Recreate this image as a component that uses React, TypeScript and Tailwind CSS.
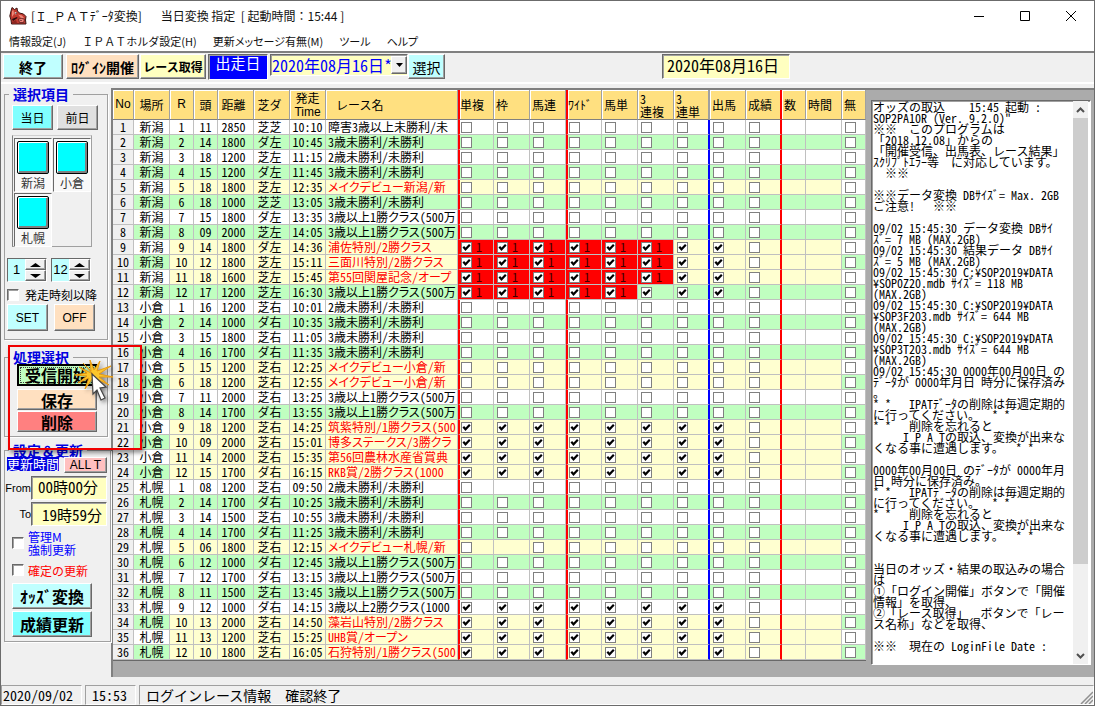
import React, { ReactNode } from 'react';
import clsx from 'clsx';

const raised =
  'border border-t-white border-l-white border-r-[#696969] border-b-[#696969] shadow-[inset_-1px_-1px_0_#a0a0a0]';
const sunken =
  'border border-t-[#696969] border-l-[#696969] border-r-white border-b-white shadow-[inset_1px_1px_0_#a0a0a0]';

// half width latin letters and digits
const half = "[font-feature-settings:'hwid']";

type Race = [place: string, r: number, heads: string, dist: string, turf: string, time: string, name: string];

const races: Race[] = [
  ['新潟', 1, '11', '2850', '芝芝', '10:10', '障害3歳以上未勝利/未'],
  ['新潟', 2, '14', '1800', 'ダ左', '10:45', '3歳未勝利/未勝利'],
  ['新潟', 3, '18', '1200', '芝左', '11:15', '2歳未勝利/未勝利'],
  ['新潟', 4, '15', '1200', 'ダ左', '11:45', '3歳未勝利/未勝利'],
  ['新潟', 5, '18', '1800', '芝左', '12:35', 'メイクデビュー新潟/新'],
  ['新潟', 6, '18', '1000', '芝芝', '13:05', '3歳未勝利/未勝利'],
  ['新潟', 7, '15', '1800', 'ダ左', '13:35', '3歳以上1勝クラス(500万'],
  ['新潟', 8, '09', '2000', '芝左', '14:05', '3歳以上1勝クラス(500万'],
  ['新潟', 9, '14', '1800', 'ダ左', '14:36', '浦佐特別/2勝クラス'],
  ['新潟', 10, '12', '1800', '芝左', '15:11', '三面川特別/2勝クラス'],
  ['新潟', 11, '18', '1600', '芝左', '15:45', '第55回関屋記念/オープ'],
  ['新潟', 12, '17', '1200', '芝左', '16:30', '3歳以上1勝クラス(500万'],
  ['小倉', 1, '16', '1200', '芝右', '10:01', '2歳未勝利/未勝利'],
  ['小倉', 2, '14', '1000', 'ダ右', '10:35', '3歳未勝利/未勝利'],
  ['小倉', 3, '15', '1800', '芝右', '11:05', '3歳未勝利/未勝利'],
  ['小倉', 4, '16', '1700', 'ダ右', '11:35', '3歳未勝利/未勝利'],
  ['小倉', 5, '15', '1200', '芝右', '12:25', 'メイクデビュー小倉/新'],
  ['小倉', 6, '18', '1200', '芝右', '12:55', 'メイクデビュー小倉/新'],
  ['小倉', 7, '11', '2000', '芝右', '13:25', '3歳以上1勝クラス(500万'],
  ['小倉', 8, '14', '1700', 'ダ右', '13:55', '3歳以上1勝クラス(500万'],
  ['小倉', 9, '18', '1200', '芝右', '14:25', '筑紫特別/1勝クラス(500'],
  ['小倉', 10, '09', '2000', '芝右', '15:01', '博多ステークス/3勝クラ'],
  ['小倉', 11, '14', '2000', '芝右', '15:35', '第56回農林水産省賞典'],
  ['小倉', 12, '15', '1700', 'ダ右', '16:15', 'RKB賞/2勝クラス(1000'],
  ['札幌', 1, '08', '1200', '芝右', '09:50', '2歳未勝利/未勝利'],
  ['札幌', 2, '14', '1700', 'ダ右', '10:25', '3歳未勝利/未勝利'],
  ['札幌', 3, '14', '1500', '芝右', '10:55', '3歳未勝利/未勝利'],
  ['札幌', 4, '14', '1700', 'ダ右', '11:25', '3歳未勝利/未勝利'],
  ['札幌', 5, '06', '1800', '芝右', '12:15', 'メイクデビュー札幌/新'],
  ['札幌', 6, '12', '1000', 'ダ右', '12:45', '3歳以上1勝クラス(500万'],
  ['札幌', 7, '12', '1700', 'ダ右', '13:15', '3歳以上1勝クラス(500万'],
  ['札幌', 8, '11', '1500', '芝右', '13:45', '3歳以上1勝クラス(500万'],
  ['札幌', 9, '12', '1000', 'ダ右', '14:15', '3歳以上2勝クラス(1000'],
  ['札幌', 10, '13', '2000', '芝右', '14:50', '藻岩山特別/2勝クラス'],
  ['札幌', 11, '13', '1200', '芝右', '15:25', 'UHB賞/オープン'],
  ['札幌', 12, '10', '1800', '芝右', '16:05', '石狩特別/1勝クラス(500'],
];

// row numbers of the main races, the selected races and the ones without frame odds
const special = [5, 9, 10, 11, 17, 18, 21, 22, 23, 24, 29, 34, 35, 36];
const selected = [9, 10, 11, 12, 21, 22, 23, 24, 33, 34, 35, 36];
const noFrame = [25, 29];
const received: Record<number, number> = { 9: 6, 10: 6, 11: 6, 12: 5 };

const oddsCols = ['単複', '枠', '馬連', 'ﾜｲﾄﾞ', '馬単', '3連複', '3連単', '出馬', '成績'];

const log = `オッズの取込    15:45 起動 :
SOP2PA10R (Ver. 9.2.0)"
※※  このプログラムは
「2018.12.08」からの
「開催受信、出馬表、レース結果」
ｽｸﾘﾌﾟﾄｴﾗｰ等  に対応しています。
  ※※

※※データ変換 DBｻｲｽﾞ= Max. 2GB
ご注意！   ※※

09/02 15:45:30 データ変換 DBｻｲ
ｽﾞ= 7 MB (MAX.2GB)
09/02 15:45:30 結果データ DBｻｲ
ｽﾞ= 5 MB (MAX.2GB)
09/02 15:45:30 C:¥SOP2019¥DATA
¥SOP0Z20.mdb ｻｲｽﾞ= 118 MB
(MAX.2GB)
09/02 15:45:30 C:¥SOP2019¥DATA
¥SOP3F203.mdb ｻｲｽﾞ= 644 MB
(MAX.2GB)
09/02 15:45:30 C:¥SOP2019¥DATA
¥SOP3T203.mdb ｻｲｽﾞ= 644 MB
(MAX.2GB)
09/02 15:45:30 0000年00月00日 の
ﾃﾞｰﾀが 0000年月日 時分に保存済み
。
＊ ＊   IPATﾃﾞｰﾀの削除は毎週定期的
に行ってください。  ＊ ＊
＊ ＊   削除を忘れると
     I P A Tの取込、変換が出来な
くなる事に遭遇します。  ＊ ＊

0000年00月00日 のﾃﾞｰﾀが 0000年月
日 時分に保存済み。
＊ ＊   IPATﾃﾞｰﾀの削除は毎週定期的
に行ってください。  ＊ ＊
＊ ＊   削除を忘れると
     I P A Tの取込、変換が出来な
くなる事に遭遇します。  ＊ ＊


当日のオッズ・結果の取込みの場合
は
①「ログイン開催」ボタンで「開催
情報」を取得、
②「レース取得」  ボタンで「レー
ス名称」などを取得、

※※  現在の LoginFile Date :`;

function Button({ className, children }: { className?: string; children: ReactNode }) {
  return (
    <button type="button" className={clsx(raised, 'flex items-center justify-center whitespace-nowrap', className)}>
      {children}
    </button>
  );
}

function GridCheck({ label, checked }: { label: string; checked?: boolean }) {
  return (
    <span className="relative block size-[11px] shrink-0">
      <input
        type="checkbox"
        aria-label={label}
        defaultChecked={checked}
        className="peer block size-[11px] appearance-none border border-[#808080] bg-white"
      />
      <svg viewBox="0 0 11 11" className="pointer-events-none absolute inset-0 hidden size-[11px] peer-checked:block">
        <path d="M2.3 4.8 L4.5 7.3 L8.8 2.8" fill="none" stroke="#000" strokeWidth="2.2" />
      </svg>
    </span>
  );
}

function SideCheck({ className, children }: { className?: string; children: ReactNode }) {
  return (
    <label className={clsx('flex items-center whitespace-nowrap text-xs leading-[13px]', className)}>
      <input type="checkbox" className={clsx(sunken, 'size-3 shrink-0 appearance-none bg-white')} />
      {children}
    </label>
  );
}

function Group({ title, className, children }: { title: string; className?: string; children: ReactNode }) {
  return (
    <fieldset className={clsx('min-w-0 border border-[#a0a0a0] shadow-[1px_1px_0_#fff]', className)}>
      <legend className="ml-1 bg-[#f0f0f0] px-1 text-sm leading-[14px] font-bold text-[#0000e0]">{title}</legend>
      {children}
    </fieldset>
  );
}

function Place({ name }: { name: string }) {
  return (
    <div className="flex h-[54px] w-[38px] flex-col items-center gap-px border border-t-[#696969] border-l-[#696969] border-r-white border-b-white bg-[#f8f8f8] pt-0.5">
      <button
        type="button"
        aria-label={name}
        className="h-[34px] w-8 rounded-xs border border-black bg-[#00ffff] shadow-[inset_1px_1px_0_#fff,inset_-2px_-2px_0_#808080]"
      />
      <span className="text-xs leading-4 text-[#333]">{name}</span>
    </div>
  );
}

function Spinner({ label, value }: { label: string; value: string }) {
  return (
    <div className="flex h-6 w-10 border border-[#696969] border-r-white border-b-white">
      <input
        aria-label={label}
        defaultValue={value}
        className="w-[17px] min-w-0 bg-[#c0ffff] text-center font-['Liberation_Sans'] text-[13px] outline-none"
      />
      <div className="flex flex-1 flex-col">
        <button type="button" aria-label={label + ' ▲'} className={clsx(raised, 'flex flex-1 items-center justify-center bg-[#f0f0f0]')}>
          <svg width="11" height="4" viewBox="0 0 11 4">
            <path d="M5.5 0 L11 4 H0 Z" />
          </svg>
        </button>
        <button type="button" aria-label={label + ' ▼'} className={clsx(raised, 'flex flex-1 items-center justify-center bg-[#f0f0f0]')}>
          <svg width="11" height="4" viewBox="0 0 11 4">
            <path d="M0 0 H11 L5.5 4 Z" />
          </svg>
        </button>
      </div>
    </div>
  );
}

function HorseIcon() {
  return (
    <svg width="18" height="18" viewBox="0 0 18 18">
      <path d="M2 4 L3 0.5 L5.5 2.5 L8 1 L8.5 4 L10.5 6 L14.5 7 L17 9.5 L16.5 13 L17 17 H2.5 L2 13 L0.8 9 Z" fill="#c0392f" stroke="#3a1512" strokeWidth="1" />
      <path d="M3 4 L4.5 3 L5 7 L3 10 Z M9 7.5 L13 8.5 L15 11 L12 11 Z" fill="#f08878" />
      <path d="M9.5 12 Q13 10.5 15.5 12.5 L14.5 15.5 H10.5 Z" fill="#f08078" stroke="#4a1a18" strokeWidth="0.7" />
      <path d="M5.8 5 h1.6 v2.2 h-1.6 z" fill="#fff" />
      <path d="M6.5 5.5 h1 v1.5 h-1 z M3 12 L8 10 L8.5 11 L4 14 Z M11.5 13 h1 v1 h-1 z" fill="#2a0c0c" />
      <path d="M3 15 L7 13 L8 16 L3 17 Z" fill="#8c2620" />
    </svg>
  );
}

function TitleBar() {
  return (
    <header className="bg-white text-xs text-[#111]">
      <div className="flex h-[30px] items-center pl-2">
        <HorseIcon />
        <h1 className="ml-1 flex-1 whitespace-pre">
          [Ｉ_ＰＡＴﾃﾞｰﾀ変換]{'       '}当日変換 指定{'  '}[ 起動時間：15:44 ]
        </h1>
        <button type="button" aria-label="最小化" className="flex w-[46px] justify-center">
          <svg width="12" height="12"><path d="M1 6.5 H11" stroke="#000" /></svg>
        </button>
        <button type="button" aria-label="最大化" className="flex w-[46px] justify-center">
          <svg width="12" height="12"><path d="M1.5 1.5 H10.5 V10.5 H1.5 Z" fill="none" stroke="#000" /></svg>
        </button>
        <button type="button" aria-label="閉じる" className="flex w-[46px] justify-center">
          <svg width="12" height="12"><path d="M1 1 L11 11 M11 1 L1 11" stroke="#000" /></svg>
        </button>
      </div>
      <nav className="flex h-5 items-center gap-4 pl-2 text-[11px] leading-5">
        <button type="button">情報設定(J)</button>
        <button type="button">ＩＰＡＴホルダ設定(H)</button>
        <button type="button" className="[font-feature-settings:'palt']">更新メッセージ有無(M)</button>
        <button type="button" className="[font-feature-settings:'palt']">ツール</button>
        <button type="button" className="[font-feature-settings:'palt']">ヘルプ</button>
      </nav>
    </header>
  );
}

function Toolbar() {
  return (
    <div className={clsx(half, 'flex h-[33px] items-start border-t-2 border-b-2 border-t-[#808080] border-b-white bg-[#f0f0f0] pt-px pl-0.5')}>
      <Button className="h-[25px] w-[60px] bg-[#c0ffff] text-sm font-bold">終了</Button>
      <Button className="ml-[3px] h-[25px] w-[73px] bg-[#ffe0c0] text-sm font-bold">ﾛｸﾞｲﾝ開催</Button>
      <Button className="ml-px h-[25px] w-[66px] bg-[#ffffc0] text-xs font-bold">レース取得</Button>
      <label htmlFor="race-day" className={clsx(sunken, 'ml-0.5 h-[26px] w-[60px] bg-[#0000ff] text-center text-[15px] leading-4 text-white')}>
        出走日
      </label>
      <div className={clsx(sunken, 'relative ml-0.5 h-[22px] w-[138px] bg-[#ffffc0]')}>
        <select id="race-day" className="block h-5 w-[120px] appearance-none overflow-hidden pl-px text-base leading-5 text-[#0000ff] outline-none">
          <option>2020年08月16日*</option>
        </select>
        <span className={clsx(raised, 'pointer-events-none absolute inset-y-px right-0 flex w-4 items-center justify-center bg-[#f0f0f0]')}>
          <svg width="7" height="4" viewBox="0 0 7 4"><path d="M0 0 H7 L3.5 4 Z" /></svg>
        </span>
      </div>
      <Button className="h-[25px] w-[37px] bg-[#c0ffff] text-sm">選択</Button>
      <input
        aria-label="対象日"
        readOnly
        value="2020年08月16日"
        className={clsx(sunken, 'ml-[217px] h-[25px] w-32 bg-[#ffffc0] pb-1 pl-1 text-base leading-5 outline-none')}
      />
    </div>
  );
}

// click hint drawn over the receive button
function ClickHint() {
  return (
    <>
      <div className="pointer-events-none absolute top-[261px] left-[7px] h-[105px] w-[134px] border-2 border-[#f00000] shadow-[2px_3px_4px_#00000066]" />
      <svg className="pointer-events-none absolute top-[276px] left-[74px] drop-shadow-[2px_2px_2px_#00000077]" width="40" height="46" viewBox="0 0 40 46">
        <path
          d="M18 14 L8 3 L16 11 L15 0 L19 10 L25 1 L22 11 L36 6 L24 14 L38 17 L24 17 L34 25 L22 19 L20 21 L17 19 L10 29 L14 18 L3 23 L12 16 L0 15 L12 13 L4 7 Z"
          fill="#fcc62c"
          stroke="#e89a10"
          strokeWidth="1"
        />
        <path d="M17 14 L31 27 L25 28 L30 38 L26 40 L22 30 L18 34 Z" fill="#fff" stroke="#444" strokeWidth="1.2" />
      </svg>
    </>
  );
}

function Sidebar() {
  return (
    <aside className="relative flex w-[110px] shrink-0 flex-col pt-[3px] pl-[3px]">
      <Group title="選択項目" className="mr-[3px] pb-2">
        <div className="mt-1 ml-[7px] flex gap-1">
          <Button className="h-[25px] w-[41px] bg-[#80ffff] text-xs">当日</Button>
          <Button className="h-[25px] w-[41px] bg-[#e0e0e0] text-xs">前日</Button>
        </div>
        <div className="mt-[5px] ml-[7px] flex h-28 w-20 flex-wrap content-start gap-px border border-t-[#d0d0d0] border-l-[#808080] border-r-[#a0a0a0] border-b-[#a0a0a0] pt-0.5 pl-px">
          <Place name="新潟" />
          <Place name="小倉" />
          <Place name="札幌" />
        </div>
        <div className="mt-[11px] ml-0.5 flex gap-1">
          <Spinner label="開始R" value="1" />
          <Spinner label="終了R" value="12" />
        </div>
        <SideCheck className="mt-1.5 ml-0.5 h-[13px] gap-1.5">発走時刻以降</SideCheck>
        <div className="mt-[3px] ml-0.5 flex gap-1.5 font-['Liberation_Sans'] text-xs">
          <Button className="h-[27px] w-[41px] bg-[#c0ffff]">SET</Button>
          <Button className="h-[27px] w-[41px] bg-[#ffe0c0]">OFF</Button>
        </div>
      </Group>

      <Group title="処理選択" className="mt-2.5 mr-[3px] pb-1">
        <div className="ml-3 flex w-20 flex-col text-base leading-4 font-bold">
          <button type="button" className="flex h-[22px] border-2 border-black bg-[#c0ffc0] p-px">
            <span className="flex flex-1 items-center justify-center border border-dotted border-[#404040] whitespace-nowrap">受信開始</span>
          </button>
          <Button className="mt-[3px] h-[21px] bg-[#ffe0c0]">保存</Button>
          <Button className="mt-px h-[21px] bg-[#ff8080]">削除</Button>
        </div>
      </Group>

      <Group title="設定＆更新" className="mt-1.5 pb-1">
        <div className="ml-0.5 flex h-4 items-start justify-between">
          <span className="bg-[#0000e0] text-[13px] leading-[14px] text-white">更新時間</span>
          <Button className="mr-[3px] h-4 w-[43px] bg-[#ffc0c0] font-['Liberation_Sans'] text-xs">ALL T</Button>
        </div>
        <div className="mt-[3px] flex h-6 items-center justify-end">
          <label htmlFor="from" className="font-['Liberation_Sans'] text-[11px]">From</label>
          <input id="from" defaultValue="00時00分" className={clsx(half, sunken, 'mr-[3px] h-6 w-[76px] bg-[#ffffc0] pb-1 pl-1.5 text-[15px] outline-none')} />
        </div>
        <div className="mt-0.5 flex h-6 items-center justify-end">
          <label htmlFor="to" className="font-['Liberation_Sans'] text-[11px]">To</label>
          <input id="to" defaultValue="19時59分" className={clsx(half, sunken, 'mr-[3px] h-6 w-[76px] bg-[#ffffc0] pl-2.5 text-[15px] outline-none')} />
        </div>
        <SideCheck className="mt-[5px] ml-[7px] h-6 gap-1 text-[#0000ff]">
          <span>
            管理M
            <br />
            強制更新
          </span>
        </SideCheck>
        <SideCheck className="mt-2 ml-[7px] h-3.5 gap-1 text-[#ff0000]">確定の更新</SideCheck>
        <div className="mt-1.5 ml-[7px] flex w-20 flex-col gap-0.5 text-base font-bold">
          <Button className="h-[26px] bg-[#c0ffff]">ｵｯｽﾞ変換</Button>
          <Button className="h-[26px] bg-[#80ffff]">成績更新</Button>
        </div>
      </Group>
      <ClickHint />
    </aside>
  );
}

const headCell = 'border-r border-b border-r-[#a0a0a0] border-b-[#808080] p-0 font-normal shadow-[inset_1px_1px_0_#fff]';
const cell = 'border-r border-b border-[#c0c0c0] p-0 whitespace-nowrap';

// coloured dividers between the odds groups
function divider(i: number) {
  if (i === 0 || i === 3) return 'border-l-2 border-l-[#ff0000]';
  if (i === 6) return 'border-r-2 border-r-[#0000ff]';
  if (i === 8) return 'border-r-2 border-r-[#ff0000]';
  return '';
}

function RaceTable() {
  return (
    <table className={clsx(half, 'w-[753px] shrink-0 table-fixed border-separate border-spacing-0 self-start border-b border-[#696969] text-xs leading-[14px]')}>
      <colgroup>
        <col className="w-[21px]" />
        <col className="w-9" />
        <col className="w-6" />
        <col className="w-6" />
        <col className="w-9" />
        <col className="w-9" />
        <col className="w-9" />
        <col className="w-[132px]" />
        {oddsCols.map((c) => (
          <col key={c} className="w-9" />
        ))}
        <col className="w-6" />
        <col className="w-9" />
        <col className="w-6" />
      </colgroup>
      <thead>
        <tr className="h-[30px] bg-[#ffe080] leading-[13px]">
          <th className={clsx(headCell, "font-['Liberation_Sans']")}>No</th>
          <th className={headCell}>場所</th>
          <th className={clsx(headCell, "font-['Liberation_Sans']")}>R</th>
          <th className={headCell}>頭</th>
          <th className={clsx(headCell, 'pr-1')}>距離</th>
          <th className={clsx(headCell, 'pr-1')}>芝ダ</th>
          <th className={headCell}>
            発走
            <br />
            <span className="font-['Liberation_Sans']">Time</span>
          </th>
          <th className={clsx(headCell, 'pl-2.5 text-left')}>レース名</th>
          {oddsCols.map((c, i) => (
            <th key={c} className={clsx(headCell, 'text-left', i === 0 || i === 3 ? 'pl-0' : 'pl-0.5', divider(i))}>
              {c.startsWith('3') ? (
                <>
                  3<br />
                  {c.slice(1)}
                </>
              ) : (
                c
              )}
            </th>
          ))}
          <th className={clsx(headCell, 'pl-0.5 text-left')}>数</th>
          <th className={clsx(headCell, 'pl-0.5 text-left')}>時間</th>
          <th className={clsx(headCell, 'pl-0.5 text-left')}>無</th>
        </tr>
      </thead>
      <tbody>
        {races.map(([place, r, heads, dist, turf, time, name], i) => {
          const no = i + 1;
          const base = no % 2 ? 'bg-white' : 'bg-[#c0ffc0]';
          const main = special.includes(no);
          const bg = main ? 'bg-[#ffffd0]' : base;
          return (
            <tr key={no} className="h-[15px] text-center">
              <th scope="row" className={clsx(cell, 'border-[#a0a0a0] bg-[#f0f0f0] font-normal')}>{no}</th>
              <td className={clsx(cell, base)}>{place}</td>
              <td className={clsx(cell, bg)}>{r}</td>
              <td className={clsx(cell, bg)}>{heads}</td>
              <td className={clsx(cell, bg, 'pr-1')}>{dist}</td>
              <td className={clsx(cell, bg, 'pr-1')}>{turf}</td>
              <td className={clsx(cell, bg)}>{time}</td>
              <td className={clsx(cell, bg, "pl-0.5 text-left [font-feature-settings:'palt','hwid']", main && 'text-[#ff0000]')}>{name}</td>
              {oddsCols.map((c, k) => {
                const red = k < (received[no] || 0);
                return (
                  <td key={c} className={clsx(cell, red ? 'bg-[#ff0000]' : bg, divider(k))}>
                    <div className={clsx('flex h-3.5 items-center gap-1', k === 0 || k === 3 ? 'pl-px' : 'pl-[3px]')}>
                      {!(k === 1 && noFrame.includes(no)) && (
                        <GridCheck label={`${no} ${c}`} checked={k < 8 && selected.includes(no)} />
                      )}
                      {red && <span className="text-[#400000]">1</span>}
                    </div>
                  </td>
                );
              })}
              <td className={clsx(cell, bg)} />
              <td className={clsx(cell, bg)} />
              <td className={clsx(cell, base)}>
                <div className="flex h-3.5 items-center pl-[3px]">
                  <GridCheck label={`${no} 無`} />
                </div>
              </td>
            </tr>
          );
        })}
      </tbody>
    </table>
  );
}

function LogPanel() {
  return (
    <section className={clsx(sunken, 'mt-2.5 mr-[3px] mb-3 ml-[5px] flex min-w-0 flex-1 bg-white')}>
      <textarea
        aria-label="ログ"
        readOnly
        value={log}
        className={clsx(half, 'min-w-0 flex-1 resize-none overflow-hidden pl-px text-xs leading-[11px] whitespace-pre outline-none')}
      />
      <div className="mr-0.5 flex w-[15px] flex-col bg-[#f0f0f0]">
        <button type="button" aria-label="上へ" className="flex h-[17px] items-center justify-center">
          <svg width="9" height="6"><path d="M1 5 L4.5 1.5 L8 5" fill="none" stroke="#505050" strokeWidth="2" /></svg>
        </button>
        <div className="h-[446px] bg-[#cdcdcd]" />
        <div className="flex-1" />
        <button type="button" aria-label="下へ" className="flex h-[17px] items-center justify-center">
          <svg width="9" height="6"><path d="M1 1 L4.5 4.5 L8 1" fill="none" stroke="#505050" strokeWidth="2" /></svg>
        </button>
      </div>
    </section>
  );
}

function StatusBar() {
  const pane = 'flex items-center border border-t-[#a0a0a0] border-l-[#a0a0a0] border-r-white border-b-white whitespace-nowrap';
  return (
    <footer className="flex h-[21px] gap-[3px] bg-[#f0f0f0] pt-px text-sm leading-[18px]">
      <div className={clsx(half, pane, 'w-[81px] pl-px')}>2020/09/02</div>
      <div className={clsx(half, pane, 'w-[51px] pl-1.5')}>15:53</div>
      <div className={clsx(pane, 'flex-1 justify-between pl-1.5')}>
        ログインレース情報　確認終了
        <svg width="13" height="13" viewBox="0 0 13 13" className="self-end">
          <path d="M1 13 L13 1 M5 13 L13 5 M9 13 L13 9" stroke="#909090" strokeWidth="1.5" />
        </svg>
      </div>
    </footer>
  );
}

export default function App() {
  return (
    <div className="flex min-h-screen flex-col border border-[#6b6b6b] bg-[#f0f0f0] font-['Noto_Sans_CJK_JP',sans-serif] text-black">
      <TitleBar />
      <Toolbar />
      <main className="flex flex-1">
        <Sidebar />
        <div className="mt-1 mb-[7px] flex min-w-0 flex-1 border-t-2 border-l-2 border-[#808080] bg-[#ababab]">
          <RaceTable />
          <LogPanel />
        </div>
      </main>
      <StatusBar />
    </div>
  );
}
